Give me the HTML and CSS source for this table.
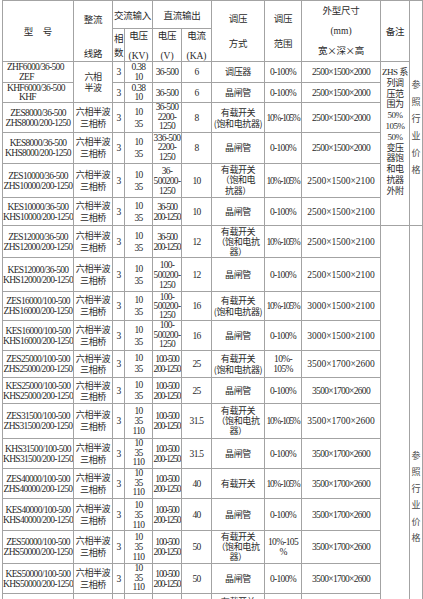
FILE: index.html
```html
<!DOCTYPE html>
<html lang="zh-CN">
<head>
<meta charset="utf-8">
<title>整流设备规格表</title>
<link rel="stylesheet" href="styles.css">
</head>
<body>
<table class="spec">
  <colgroup>
    <col class="w1"><col class="w2"><col class="w3"><col class="w4"><col class="w5"><col class="w6">
    <col class="w7"><col class="w8"><col class="w9"><col class="w10"><col class="w11">
  </colgroup>
  <tr class="hA">
    <td rowspan="2" class="hd xh">型&emsp;号</td>
    <td rowspan="2" class="hd vt"><span class="b1">整流</span><span class="b2">线路</span></td>
    <td colspan="2" class="hd">交流输入</td>
    <td colspan="2" class="hd">直流输出</td>
    <td rowspan="2" class="hd l25">调压<br>方式</td>
    <td rowspan="2" class="hd l25">调压<br>范围</td>
    <td rowspan="2" class="hd l195">外型尺寸<br><span class="en">(mm)</span><br>宽×深×高</td>
    <td rowspan="2" class="hd">备注</td>
    <td rowspan="8" class="cn vt v1">参<br>照<br>行<br>业<br>价<br>格</td>
  </tr>
  <tr class="hB">
    <td class="hd l14">相<br>数</td>
    <td class="hd"><span class="s1">电压</span><span class="s2 en">(KV)</span></td>
    <td class="hd"><span class="s1">电压</span><span class="s2 en">(V)</span></td>
    <td class="hd"><span class="s1">电流</span><span class="s2 en">(KA)</span></td>
  </tr>
  <tr class="r1">
    <td class="ml">ZHF6000/36-500<br><span class="ind">ZEF</span></td>
    <td rowspan="2" class="cn l11">六相<br>半波</td>
    <td>3</td><td>0.38<br>10</td><td>36-500</td><td>6</td>
    <td class="cn">调压器</td><td>0-100%</td><td>2500×1500×2000</td>
    <td rowspan="6" class="vt bz">ZHS 系<br>列调<br>压范<br>围为<br>50%<br>105%<br>50%<br>变压<br>器饱<br>和电<br>抗器<br>外附</td>
  </tr>
  <tr class="r2">
    <td class="ml c9">KHF6000/36-500<br><span class="ind">KHF</span></td>
    <td>3</td><td class="c9">0.38<br>10</td><td>36-500</td><td>6</td>
    <td class="cn">晶闸管</td><td>0-100%</td><td>2500×1500×2000</td>
  </tr>
  <tr class="r3">
    <td>ZES8000/36-500<br>ZHS8000/200-1250</td>
    <td class="cn l12">六相半波<br>三相桥</td>
    <td>3</td><td class="l12">10<br>35</td><td class="c95">36-500<br>2200-<br>1250</td><td>8</td>
    <td class="cn l11">有载开关<br>(饱和电抗器)</td><td class="sq">10%-105%</td><td>2500×1500×2000</td>
  </tr>
  <tr class="r4">
    <td>KES8000/36-500<br>KHS8000/200-1250</td>
    <td class="cn l12">六相半波<br>三相桥</td>
    <td>3</td><td class="l12">10<br>35</td><td class="c95">336-500<br>2200-<br>1250</td><td>8</td>
    <td class="cn">晶闸管</td><td>0-100%</td><td>2500×1500×2000</td>
  </tr>
  <tr class="r5">
    <td>ZES10000/36-500<br>ZHS10000/200-1250</td>
    <td class="cn l12">六相半波<br>三相桥</td>
    <td>3</td><td class="l12">10<br>35</td><td>36-<br>500200-<br>1250</td><td>10</td>
    <td class="cn c105">有载开关<br>（饱和电<br>抗器）</td><td class="sq">10%-105%</td><td class="d0">2500×1500×2100</td>
  </tr>
  <tr class="r6">
    <td>KES10000/36-500<br>KHS10000/200-1250</td>
    <td class="cn l12">六相半波<br>三相桥</td>
    <td>3</td><td class="l12">10<br>35</td><td class="sq">36-500<br>200-1250</td><td>10</td>
    <td class="cn">晶闸管</td><td>0-100%</td><td class="d0">2500×1500×2100</td>
  </tr>
  <tr class="r7">
    <td>ZES12000/36-500<br>ZHS12000/200-1250</td>
    <td class="cn l12">六相半波<br>三相桥</td>
    <td>3</td><td class="l12">10<br>35</td><td class="sq">36-500<br>200-1250</td><td>12</td>
    <td class="cn">有载开关<br>（饱和电抗<br>器）</td><td class="sq">10%-105%</td><td class="d0">2500×1500×2100</td>
    <td rowspan="13"></td>
    <td rowspan="13" class="cn vt v2">参<br>照<br>行<br>业<br>价<br>格</td>
  </tr>
  <tr class="r8">
    <td>KES12000/36-500<br>KHS12000/200-1250</td>
    <td class="cn l12">六相半波<br>三相桥</td>
    <td>3</td><td class="l12">10<br>35</td><td>100-<br>500200-<br>1250</td><td>12</td>
    <td class="cn">晶闸管</td><td>0-100%</td><td class="d0">2500×1500×2100</td>
  </tr>
  <tr class="r9">
    <td>ZES16000/100-500<br>ZHS16000/200-1250</td>
    <td class="cn l12">六相半波<br>三相桥</td>
    <td>3</td><td class="l12">10<br>35</td><td class="c9">100-<br>500200-<br>1250</td><td>16</td>
    <td class="cn l11">有载开关<br>(饱和电抗器)</td><td class="sq">10%-105%</td><td class="d0">3000×1500×2100</td>
  </tr>
  <tr class="r10">
    <td>KES16000/100-500<br>KHS16000/200-1250</td>
    <td class="cn l12">六相半波<br>三相桥</td>
    <td>3</td><td class="l12">10<br>35</td><td class="c95">100-<br>500200-<br>1250</td><td>16</td>
    <td class="cn">晶闸管</td><td>0-100%</td><td class="d0">3000×1500×2100</td>
  </tr>
  <tr class="r11">
    <td>ZES25000/100-500<br>ZHS25000/200-1250</td>
    <td class="cn l11">六相半波<br>三相桥</td>
    <td>3</td><td class="l11">10<br>35</td><td class="sq">100-500<br>200-1250</td><td>25</td>
    <td class="cn l11">有载开关<br>(饱和电抗器)</td><td>10%-<br>105%</td><td class="d0">3500×1700×2600</td>
  </tr>
  <tr class="r12">
    <td>KES25000/100-500<br>KHS25000/200-1250</td>
    <td class="cn l11">六相半波<br>三相桥</td>
    <td>3</td><td class="l11">10<br>35</td><td class="sq">100-500<br>200-1250</td><td>25</td>
    <td class="cn">晶闸管</td><td>0-100%</td><td>3500×1700×2600</td>
  </tr>
  <tr class="r13">
    <td>ZES31500/100-500<br>ZHS31500/200-1250</td>
    <td class="cn l12">六相半波<br>三相桥</td>
    <td>3</td><td>10<br>35<br>110</td><td class="sq">100-500<br>200-1250</td><td>31.5</td>
    <td class="cn">有载开关<br>（饱和电抗<br>器）</td><td class="sq">10%-105%</td><td class="d0">3500×1700×2600</td>
  </tr>
  <tr class="r14">
    <td>KHS31500/100-500<br>KHS31500/200-1250</td>
    <td class="cn l12">六相半波<br>三相桥</td>
    <td>3</td><td class="c95">10<br>35<br>110</td><td class="sq">100-500<br>200-1250</td><td>31.5</td>
    <td class="cn">晶闸管</td><td>0-100%</td><td>3500×1700×2600</td>
  </tr>
  <tr class="r15">
    <td>ZES40000/100-500<br>ZHS40000/200-1250</td>
    <td class="cn l12">六相半波<br>三相桥</td>
    <td>3</td><td class="c95">10<br>35<br>110</td><td class="sq">100-500<br>200-1250</td><td>40</td>
    <td class="cn">有载开关</td><td class="sq">10%-105%</td><td>3500×1700×2600</td>
  </tr>
  <tr class="r16">
    <td>KES40000/100-500<br>KHS40000/200-1250</td>
    <td class="cn l12">六相半波<br>三相桥</td>
    <td>3</td><td>10<br>35<br>110</td><td class="sq">100-500<br>200-1250</td><td>40</td>
    <td class="cn">晶闸管</td><td>0-100%</td><td>3500×1700×2600</td>
  </tr>
  <tr class="r17">
    <td>ZES50000/100-500<br>ZHS50000/200-1250</td>
    <td class="cn l12">六相半波<br>三相桥</td>
    <td>3</td><td>10<br>35<br>110</td><td class="sq">100-500<br>200-1250</td><td>50</td>
    <td class="cn">有载开关<br>（饱和电抗<br>器）</td><td>10%-105<br>%</td><td>3500×1700×2600</td>
  </tr>
  <tr class="r18">
    <td>KES50000/100-500<br>KHS50000/200-1250</td>
    <td class="cn l12">六相半波<br>三相桥</td>
    <td>3</td><td class="c95">10<br>35<br>110</td><td class="sq">100-500<br>200-1250</td><td>50</td>
    <td class="cn">晶闸管</td><td>0-100%</td><td>3500×1700×2600</td>
  </tr>
  <tr class="r19">
    <td></td><td></td><td></td><td></td><td></td><td></td>
    <td class="cn vt p4">有载开关<br>（饱和电抗<br>器）</td><td></td><td></td>
  </tr>
</table>
</body>
</html>
```

FILE: styles.css
```css
html, body {
  margin: 0;
  padding: 0;
  background: #ffffff;
}
body {
  width: 423px;
  height: 599px;
  overflow: hidden;
}
.spec {
  border-collapse: collapse;
  table-layout: fixed;
  width: 421px;
  margin: 0 0 0 2px;
  font-family: "Liberation Serif", "Noto Sans CJK SC", serif;
  font-size: 9.5px;
  letter-spacing: -0.7px;
  color: #2a2a2a;
}
.spec td {
  border: 1px solid #a3a3a3;
  padding: 0;
  text-align: center;
  vertical-align: middle;
  line-height: 10px;
  white-space: nowrap;
  overflow: hidden;
}
.w1 { width: 71px; }
.w2 { width: 39px; }
.w3 { width: 12px; }
.w4 { width: 28px; }
.w5 { width: 29px; }
.w6 { width: 30px; }
.w7 { width: 53px; }
.w8 { width: 37px; }
.w9 { width: 79px; }
.w10 { width: 29px; }
.w11 { width: 13px; }

.hA { height: 28px; }
.hB { height: 33px; }
.r1 { height: 21px; }
.r2 { height: 20px; }
.r3 { height: 30px; }
.r4 { height: 31px; }
.r5 { height: 34px; }
.r6 { height: 28px; }
.r7 { height: 32px; }
.r8 { height: 34px; }
.r9 { height: 29px; }
.r10 { height: 30px; }
.r11 { height: 27px; }
.r12 { height: 26px; }
.r13 { height: 35px; }
.r14 { height: 30px; }
.r15 { height: 30px; }
.r16 { height: 32px; }
.r17 { height: 33px; }
.r18 { height: 30px; }
.r19 { height: 32px; }

/* Chinese-text cells use the CJK face as their primary font so line boxes stay exact */
.spec td.cn {
  font-family: "Noto Sans CJK SC", sans-serif;
  font-size: 9px;
  letter-spacing: -0.4px;
}
.spec td.hd {
  font-family: "Noto Sans CJK SC", sans-serif;
  font-size: 9.5px;
  letter-spacing: -0.3px;
}
.en {
  font-family: "Liberation Serif", serif;
  letter-spacing: 0;
}
.spec td.xh { letter-spacing: 0; }
.spec td.vt { vertical-align: top; }
.b1 { display: block; line-height: 12px; margin-top: 12px; }
.b2 { display: block; line-height: 12px; margin-top: 22px; }
.s1 { display: block; line-height: 10px; }
.s2 { display: block; line-height: 10px; margin-top: 11px; }
.spec td.l25 { line-height: 25px; }
.spec td.l195 { line-height: 19.5px; }
.spec td.l14 { line-height: 14px; }
.spec td.l12 { line-height: 12px; }
.spec td.l11 { line-height: 11px; }
.spec td.c105 { line-height: 10.5px; }
.spec td.c95 { line-height: 9.5px; }
.spec td.c9 { line-height: 9px; }
.spec td.ml { text-align: left; padding-left: 4px; }
.ind { padding-left: 12px; }
.spec td.sq { letter-spacing: -1.2px; }
.spec td.d0 { letter-spacing: 0; }
.spec td.v1 {
  padding-top: 75px;
  line-height: 17px;
  color: #4a4a4a;
  letter-spacing: 0;
}
.spec td.v2 {
  padding-top: 222px;
  line-height: 16.4px;
  color: #4a4a4a;
  letter-spacing: 0;
}
.spec td.bz {
  padding-top: 5px;
  line-height: 10.8px;
  font-size: 9px;
  letter-spacing: -0.5px;
}
.spec td.p4 { padding-top: 3px; }
```
